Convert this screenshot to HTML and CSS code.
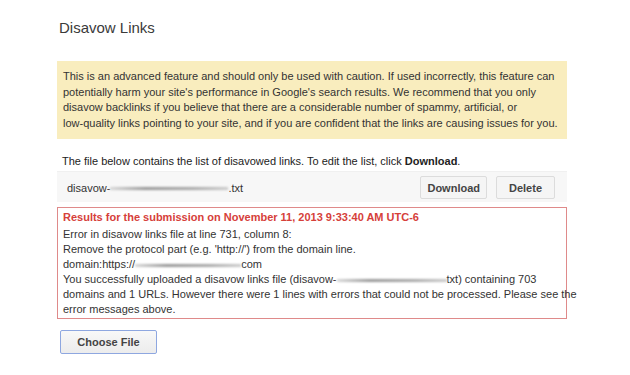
FILE: index.html
```html
<!DOCTYPE html>
<html lang="en">

<head>
  <meta charset="UTF-8" />
  <meta name="viewport" content="width=device-width, initial-scale=1.0" />
  <title>Disavow Links</title>
  <link rel="stylesheet" href="styles.css">
</head>

<body>
  <div class="container">
    <h1>Disavow Links</h1>

    <div class="warning">
      This is an advanced feature and should only be used with caution. If used incorrectly, this feature can
      potentially harm your site's performance in Google's search results. We recommend that you only
      disavow backlinks if you believe that there are a considerable number of spammy, artificial, or
      <span class="nowrap">low-quality</span> links pointing to your site, and if you are confident that the links are causing issues for you.
    </div>

    <p class="intro">The file below contains the list of disavowed links. To edit the list, click <b>Download</b>.</p>

    <div class="file-row">
      <span class="file-name">disavow-<span class="blur" style="width: 118px;"></span>.txt</span>
      <button class="button">Download</button>
      <button class="button">Delete</button>
    </div>

    <div class="results">
      <div class="results-title">Results for the submission on November 11, 2013 9:33:40 AM UTC-6</div>
      <div>Error in disavow links file at line 731, column 8:</div>
      <div>Remove the protocol part (e.g. 'http://') from the domain line.</div>
      <div>domain:https://<span class="blur" style="width: 106px;"></span>com</div>
      <div>You successfully uploaded a disavow links file (disavow-<span class="blur" style="width: 110px;"></span>txt) containing 703<br>
        domains and 1 URLs. However there were 1 lines with errors that could not be processed. Please see the<br>
        error messages above.</div>
    </div>

    <button class="choose-button">Choose File</button>
  </div>
</body>

</html>
```

FILE: styles.css
```css
body {
  font-family: "Liberation Sans", Arial, sans-serif;
  margin: 0;
  background: white;
  color: #333;
}

.container {
  width: 510px;
  padding: 19px 0 0 57px;
}

h1 {
  font-size: 15px;
  font-weight: normal;
  color: #3a3a3a;
  margin: 0 0 25px 2px;
}

.warning {
  background: #f9edbe;
  font-size: 11px;
  line-height: 15.5px;
  padding: 8px 4px 8px 6px;
  color: #333;
}

.nowrap {
  white-space: nowrap;
}

.intro {
  font-size: 11px;
  margin: 16px 0 4px 5px;
  color: #222;
}

.file-row {
  display: flex;
  align-items: center;
  gap: 9px;
  background: #f7f7f7;
  border-top: 1px solid #f0f0f0;
  padding: 4px 12px 3px 10px;
  height: 23px;
}

.file-name {
  flex: 1;
  font-size: 11px;
  color: #333;
}

.blur {
  display: inline-block;
  height: 3px;
  background: linear-gradient(90deg, #d8d8d8, #999 30%, #aaa 70%, #ccc);
  filter: blur(0.8px);
  vertical-align: middle;
}

.button {
  font-family: "Liberation Sans", Arial, sans-serif;
  font-size: 11px;
  font-weight: bold;
  color: #444;
  background: #f5f5f5;
  border: 1px solid #dcdcdc;
  border-radius: 2px;
  height: 23px;
  padding: 0 6px;
  min-width: 59px;
}

.results {
  border: 1px solid #df8a8a;
  margin-top: 5px;
  padding: 2px 3px 1px 5px;
  font-size: 11px;
  line-height: 15px;
  color: #333;
  white-space: nowrap;
}

.results-title {
  color: #d6403a;
  font-weight: bold;
  margin-bottom: 2px;
}

.choose-button {
  font-family: "Liberation Sans", Arial, sans-serif;
  font-size: 11px;
  font-weight: bold;
  color: #444;
  background: linear-gradient(#f8f8f8, #ececec);
  border: 1px solid #8ea7e0;
  border-radius: 2px;
  width: 97px;
  height: 24px;
  margin: 11px 0 0 3px;
}
```
